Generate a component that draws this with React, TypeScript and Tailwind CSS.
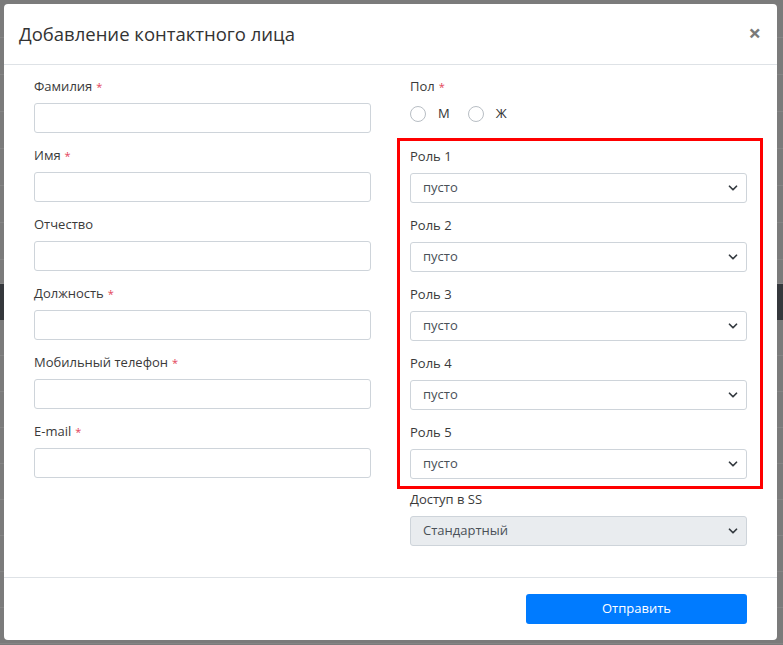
import { ChevronDown } from 'lucide-react'

const FONT = { fontFamily: '"Open Sans", "Noto Sans", sans-serif' }

const LEFT_FIELDS = [
  { label: 'Фамилия', required: true },
  { label: 'Имя', required: true },
  { label: 'Отчество', required: false },
  { label: 'Должность', required: true },
  { label: 'Мобильный телефон', required: true },
  { label: 'E-mail', required: true },
]

const ROLES = ['Роль 1', 'Роль 2', 'Роль 3', 'Роль 4', 'Роль 5']

function Label({ text, required }: { text: string; required?: boolean }) {
  return (
    <div className="mb-[8px] h-[18px] text-[13px] leading-[18px] text-[#3a3a3a]">
      {text}
      {required && <span className="ml-[4px] text-[11px] text-[#e3445a]">*</span>}
    </div>
  )
}

function TextInput() {
  return <div className="h-[30px] rounded-[3px] border border-[#ced4da] bg-white" />
}

function Select({ value, disabled }: { value: string; disabled?: boolean }) {
  return (
    <div
      className={`flex h-[30px] items-center justify-between rounded-[3px] border border-[#ced4da] pl-[12px] pr-[6px] text-[13px] text-[#495057] ${
        disabled ? 'bg-[#e9ecef]' : 'bg-white'
      }`}
    >
      <span>{value}</span>
      <ChevronDown className="h-[14px] w-[14px] text-[#343a40]" strokeWidth={3} />
    </div>
  )
}

// dimmed page behind the modal
function Backdrop() {
  return (
    <div className="flex h-full w-full flex-col">
      {[38, 37, 37, 37, 37, 37, 37, 24].map((h, i) => (
        <div key={i} style={{ height: h }} className="shrink-0 border-b border-[#858585]" />
      ))}
      <div className="h-[36px] shrink-0 bg-[#35383c]" />
      {[36, 36, 36, 36, 36, 36, 36, 36, 36, 36].map((h, i) => (
        <div key={'b' + i} style={{ height: h }} className="shrink-0 border-b border-[#858585]" />
      ))}
    </div>
  )
}

export default function App() {
  return (
    <div className="relative h-[645px] w-[783px] overflow-hidden bg-[#7b7b7b]" style={FONT}>
      <Backdrop />

      <div className="absolute left-[4px] top-[4px] flex h-[636px] w-[773px] flex-col rounded-[4px] bg-white">
        <div className="flex h-[61px] items-center justify-between border-b border-[#dee2e6] pl-[15px] pr-[16px]">
          <h1 className="text-[18.5px] text-[#333]">Добавление контактного лица</h1>
          <span className="-mt-[4px] text-[22px] font-bold leading-none text-[#7a7a7a]">×</span>
        </div>

        <div className="flex flex-1 gap-[39px] border-b border-[#dee2e6] px-[30px] pt-[12px]">
          <div className="w-[337px]">
            {LEFT_FIELDS.map((f) => (
              <div key={f.label} className="mb-[13px]">
                <Label text={f.label} required={f.required} />
                <TextInput />
              </div>
            ))}
          </div>

          <div className="w-[337px]">
            <div className="mb-[22px]">
              <Label text="Пол" required />
              <div className="flex h-[22px] items-center text-[13px] text-[#333]">
                <span className="h-[16px] w-[16px] rounded-full border border-[#b8bec4]" />
                <span className="ml-[12px]">М</span>
                <span className="ml-[18px] h-[16px] w-[16px] rounded-full border border-[#b8bec4]" />
                <span className="ml-[12px]">Ж</span>
              </div>
            </div>

            <div className="relative">
              {ROLES.map((r) => (
                <div key={r} className="mb-[13px]">
                  <Label text={r} />
                  <Select value="пусто" />
                </div>
              ))}
              <div className="pointer-events-none absolute -left-[13px] -right-[16px] -top-[9px] -bottom-[10px] border-[3px] border-[#ff0000]" />
            </div>

            <div className="-mt-[2px]">
              <Label text="Доступ в SS" />
              <Select value="Стандартный" disabled />
            </div>
          </div>
        </div>

        <div className="flex h-[62px] items-center justify-end px-[30px]">
          <button className="h-[30px] w-[221px] rounded-[3px] bg-[#007bff] text-[13px] text-white">
            Отправить
          </button>
        </div>
      </div>
    </div>
  )
}
